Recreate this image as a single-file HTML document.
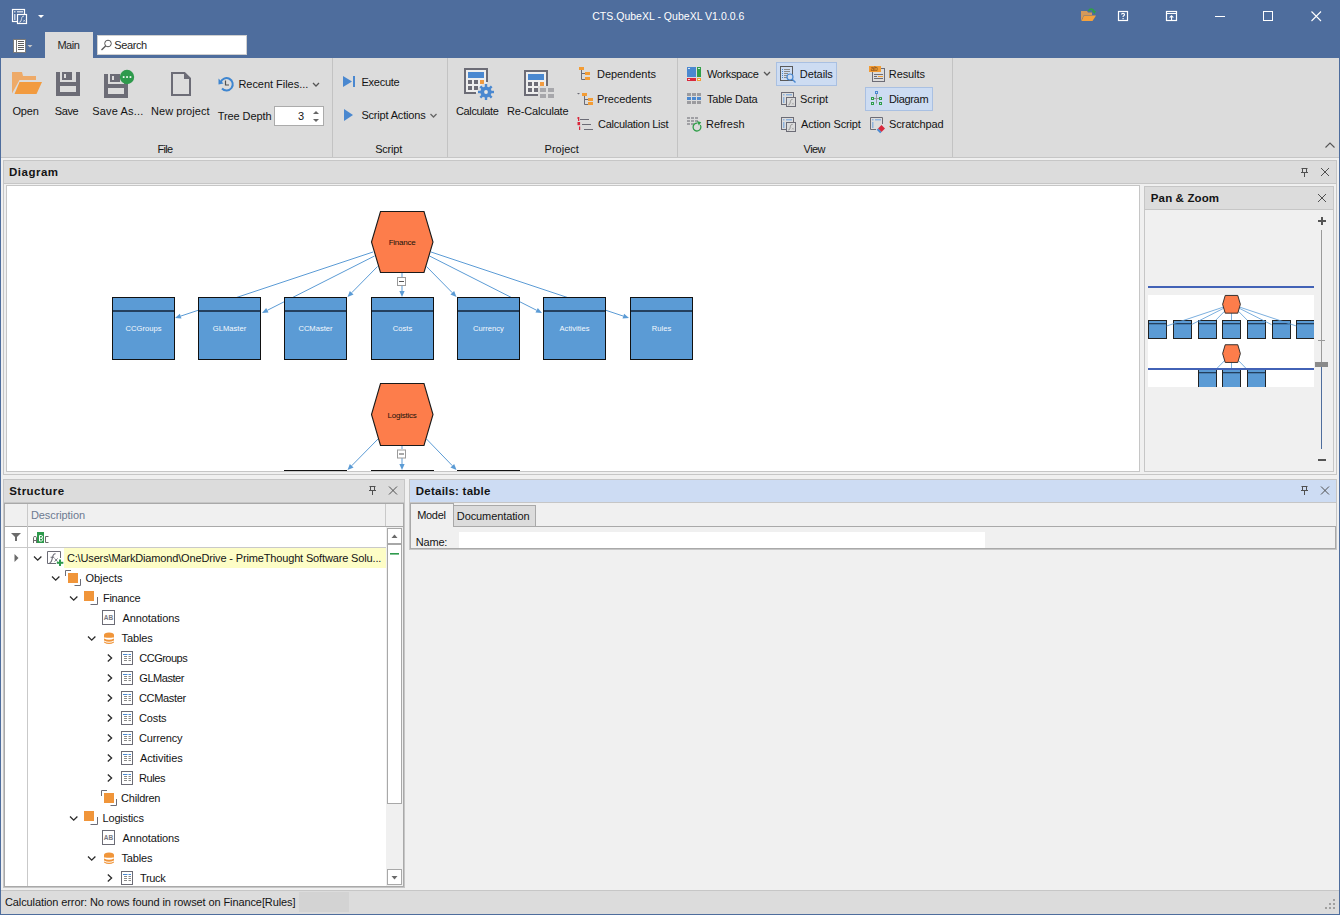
<!DOCTYPE html>
<html><head><meta charset="utf-8">
<style>
*{box-sizing:border-box;margin:0;padding:0}
html,body{width:1340px;height:915px;overflow:hidden}
body{position:relative;background:#f0f0f0;font-family:"Liberation Sans",sans-serif;font-size:11px;color:#1e1e1e}
.a{position:absolute}
.t{position:absolute;white-space:nowrap;line-height:1;font-size:11px;color:#141414}
svg{position:absolute;overflow:visible}
.b{font-weight:bold;font-size:11.5px}
</style></head><body>
<!-- window frame -->
<div class="a" style="left:0;top:0;width:1340px;height:58px;background:#4e6d9d"></div>
<div class="a" style="left:0;top:0;width:1px;height:915px;background:#4e6d9d"></div>
<div class="a" style="left:1339px;top:0;width:1px;height:915px;background:#4e6d9d"></div>
<div class="a" style="left:0;top:914px;width:1340px;height:1px;background:#4e6d9d"></div>

<!-- TITLE BAR -->
<svg style="left:0;top:0" width="60" height="58">
  <rect x="12.5" y="9.5" width="12" height="12" fill="none" stroke="#fff" stroke-width="1.2"/>
  <rect x="14" y="11" width="1.5" height="1.5" fill="#c9d3e3"/>
  <rect x="17" y="11" width="6" height="1.5" fill="#c9d3e3"/>
  <rect x="14" y="14" width="1.5" height="6" fill="#c9d3e3"/>
  <rect x="17.5" y="14.5" width="9" height="9" fill="#4e6d9d" stroke="#fff" stroke-width="1.2"/>
  <path d="M19.3 22.2 C21 22.4 21.2 20 21.6 18.5 C22 16.6 22.6 16 24 16.2" fill="none" stroke="#dfe5ef" stroke-width="1"/><path d="M23.3 19.8 L25.2 21.7 M25.2 19.8 L23.3 21.7" stroke="#dfe5ef" stroke-width="0.7"/>
  <path d="M38 15 L44 15 L41 18 Z" fill="#fff"/>
  <rect x="13.5" y="39.5" width="12" height="13" fill="#fff" stroke="#7a7a7a" stroke-width="1"/>
  <rect x="16" y="40" width="1" height="12" fill="#7a7a7a"/>
  <rect x="18" y="41" width="6" height="1" fill="#606060"/>
  <rect x="18" y="43" width="6" height="1" fill="#606060"/>
  <rect x="18" y="45" width="6" height="1" fill="#606060"/>
  <rect x="18" y="47" width="6" height="1" fill="#606060"/>
  <rect x="18" y="49" width="6" height="1" fill="#606060"/>
  <path d="M27.5 45 L32.5 45 L30 47.5 Z" fill="#c8c8c8"/>
</svg>
<div class="t" style="left:592.2px;top:11px;color:#fff;font-size:10.5px;letter-spacing:0.023px">CTS.QubeXL - QubeXL V1.0.0.6</div>
<svg style="left:1075px;top:0" width="265" height="32">
  <!-- open folder with green arrow -->
  <path d="M6 11 L12 11 L13 12.5 L17 12.5 L17 15 L9 15 L6 21 Z" fill="#d39a5a"/>
  <path d="M9 15.5 L21 15.5 L17.5 21 L6.5 21 Z" fill="#f4a23d"/>
  <path d="M13.5 11 C15 8.5 18 8.5 19 11.5" fill="none" stroke="#2f9e48" stroke-width="1.8"/>
  <path d="M17 11 L21 11 L19.5 14 Z" fill="#2f9e48"/>
  <!-- help -->
  <rect x="43.5" y="11.5" width="9" height="9" fill="none" stroke="#fff" stroke-width="1.2"/>
  <path d="M46.5 14.5 C46.5 13 49.5 13 49.5 14.5 C49.5 16 48 15.5 48 17" fill="none" stroke="#fff" stroke-width="1.1"/>
  <rect x="47.5" y="18" width="1.2" height="1.2" fill="#fff"/>
  <!-- third icon -->
  <rect x="91.5" y="11.5" width="10" height="9" fill="none" stroke="#fff" stroke-width="1.2"/>
  <rect x="92" y="13" width="9" height="1" fill="#fff"/>
  <path d="M94 17.5 L96.5 15 L99 17.5 Z" fill="#fff"/>
  <rect x="96" y="17" width="1.1" height="3.5" fill="#fff"/>
  <!-- min max close -->
  <rect x="140" y="16" width="10" height="1" fill="#fff"/>
  <rect x="188.5" y="11.5" width="9" height="9" fill="none" stroke="#fff" stroke-width="1"/>
  <path d="M236.5 11.5 L246 21 M246 11.5 L236.5 21" stroke="#fff" stroke-width="1.1"/>
</svg>

<!-- TAB ROW -->
<div class="a" style="left:45px;top:32px;width:48px;height:26px;background:#dcdcdc"></div>
<div class="t" style="left:57.4px;top:40px;color:#262626;letter-spacing:-0.467px">Main</div>
<div class="a" style="left:97px;top:35px;width:150px;height:20px;background:#fff;border:1px solid #d0d0d0"></div>
<svg style="left:100px;top:38px" width="14" height="14">
  <circle cx="8" cy="5.5" r="3.3" fill="none" stroke="#555" stroke-width="1"/>
  <path d="M5.6 8 L1.5 12" stroke="#555" stroke-width="1.3"/>
</svg>
<div class="t" style="left:114.2px;top:40px;color:#262626;letter-spacing:-0.36px">Search</div>

<!-- RIBBON -->
<div class="a" style="left:1px;top:58px;width:1338px;height:100px;background:#dcdcdc;border-bottom:1px solid #c6c6c6"></div>
<div class="a" style="left:332px;top:58px;width:1px;height:99px;background:#c3c3c3"></div>
<div class="a" style="left:447px;top:58px;width:1px;height:99px;background:#c3c3c3"></div>
<div class="a" style="left:677px;top:58px;width:1px;height:99px;background:#c3c3c3"></div>
<div class="a" style="left:952px;top:58px;width:1px;height:99px;background:#c3c3c3"></div>

<svg style="left:0;top:0" width="1340" height="160">
  <!-- Open -->
  <path d="M12 72 H22 L23 76 H36 V80 H19.5 L12 93.5 Z" fill="#eeaa68"/>
  <path d="M19.5 82 H42 L36.5 94 H14.5 Z" fill="#f29b3f"/>
  <!-- Save -->
  <g fill="#6c6c76">
    <rect x="56" y="72" width="4" height="24"/><rect x="76" y="72" width="4" height="24"/>
    <rect x="56" y="82" width="24" height="4"/><rect x="56" y="92" width="24" height="4"/>
    <rect x="62" y="72" width="10" height="8"/>
  </g>
  <rect x="64" y="74" width="2" height="4" fill="#dcdcdc"/>
  <!-- Save As -->
  <g fill="#6c6c76">
    <rect x="104" y="74" width="4" height="24"/><rect x="124" y="74" width="4" height="24"/>
    <rect x="104" y="84" width="24" height="4"/><rect x="104" y="94" width="24" height="4"/>
    <rect x="110" y="74" width="10" height="8"/>
  </g>
  <rect x="112" y="76" width="2" height="4" fill="#dcdcdc"/>
  <circle cx="127" cy="77" r="7.2" fill="#2e9a4c"/>
  <rect x="122.8" y="76.2" width="1.7" height="1.7" fill="#fff"/>
  <rect x="126.2" y="76.2" width="1.7" height="1.7" fill="#fff"/>
  <rect x="129.6" y="76.2" width="1.7" height="1.7" fill="#fff"/>
  <!-- New project -->
  <path d="M172 73 H184.5 L190 78.5 V95 H172 Z" fill="none" stroke="#6c6c76" stroke-width="2"/>
  <path d="M184 72 L191 79 H184 Z" fill="#6c6c76"/>
  <!-- Recent -->
  <path d="M220.6 82.5 A6.2 6.2 0 1 1 222 88.5" fill="none" stroke="#3f86d0" stroke-width="2"/>
  <path d="M218.5 78.5 L223.5 83.5 L218.5 84.5 Z" fill="#3f86d0"/>
  <path d="M225.5 80.5 V85 H229" fill="none" stroke="#505050" stroke-width="1.2"/>
  <path d="M313 83 L316 86 L319 83" fill="none" stroke="#555" stroke-width="1.3"/>
  <!-- spin -->
  <rect x="274.5" y="106.5" width="49" height="19" fill="#fff" stroke="#ababab"/>
  <path d="M313 114 L316 111 L319 114 Z" fill="#666"/>
  <path d="M313 119 L316 122 L319 119 Z" fill="#666"/>
  <!-- Execute -->
  <path d="M343 76 L352 81.5 L343 87 Z" fill="#4a88d0"/>
  <rect x="353" y="76" width="2" height="11" fill="#4a88d0"/>
  <path d="M344 109 L353 115 L344 121 Z" fill="#4a88d0"/>
  <path d="M430.5 114 L433.5 117 L436.5 114" fill="none" stroke="#666" stroke-width="1.3"/>
  <!-- Calculate -->
  <rect x="465" y="69" width="22" height="24" fill="#eeeeee"/>
  <path d="M476 93 H465 V69 H487 V82" fill="none" stroke="#6c6c76" stroke-width="2"/>
  <rect x="468" y="72" width="16" height="6" fill="#4a88d0"/>
  <g fill="#6c6c76"><rect x="468" y="80" width="4" height="4"/><rect x="474" y="80" width="4" height="4"/><rect x="468" y="86" width="4" height="4"/><rect x="474" y="86" width="4" height="4"/></g>
  <rect x="480" y="80" width="4" height="4" fill="#f29b3f"/>
  <circle cx="486" cy="92" r="8.5" fill="#dcdcdc"/>
  <g fill="#4a88d0">
    <circle cx="486" cy="92" r="5.6"/>
    <rect x="484.8" y="84" width="2.4" height="16"/>
    <rect x="478" y="90.8" width="16" height="2.4"/>
    <rect x="484.8" y="84" width="2.4" height="16" transform="rotate(45 486 92)"/>
    <rect x="478" y="90.8" width="16" height="2.4" transform="rotate(45 486 92)"/>
  </g>
  <circle cx="486" cy="92" r="1.9" fill="#e6e6e6"/>
  <!-- Re-Calculate -->
  <rect x="525" y="71" width="22" height="24" fill="#eeeeee"/>
  <path d="M538 95 H525 V71 H547 V86" fill="none" stroke="#6c6c76" stroke-width="2"/>
  <rect x="528" y="74" width="16" height="6" fill="#4a88d0"/>
  <g fill="#6c6c76"><rect x="528" y="82" width="4" height="4"/><rect x="534" y="82" width="4" height="4"/><rect x="528" y="88" width="4" height="4"/><rect x="534" y="88" width="4" height="4"/></g>
  <rect x="540" y="82" width="4" height="4" fill="#f29b3f"/>
  <rect x="538" y="86" width="18" height="13" fill="#dcdcdc"/>
  <g fill="#a7a7ab"><rect x="540" y="88" width="6" height="4"/><rect x="548" y="88" width="6" height="4"/><rect x="540" y="94" width="6" height="4"/><rect x="548" y="94" width="6" height="4"/></g>
  <!-- Dependents -->
  <rect x="579" y="67" width="5" height="3" fill="#f39c34"/>
  <path d="M581.5 70 V79.5 H585 M581.5 73.5 H585" fill="none" stroke="#6c6c76" stroke-width="1"/>
  <rect x="585" y="72" width="5" height="3" fill="#f39c34"/>
  <rect x="585" y="77" width="5" height="3" fill="#f39c34"/>
  <!-- Precedents -->
  <path d="M577 93 H580 L578.5 94.5 Z" fill="#6c6c76"/>
  <rect x="582" y="93" width="5" height="3" fill="#f39c34"/>
  <path d="M584.5 96 V104.5 H588 M584.5 99.5 H588" fill="none" stroke="#6c6c76" stroke-width="1"/>
  <rect x="588" y="98" width="5" height="3" fill="#f39c34"/>
  <rect x="588" y="102" width="5" height="3" fill="#f39c34"/>
  <!-- Calculation List -->
  <g fill="#d9283c">
    <rect x="578" y="117" width="1.3" height="4"/><rect x="577" y="117.5" width="1.2" height="1"/>
    <rect x="577.5" y="122" width="2.6" height="3.2"/>
    <rect x="579" y="126.5" width="1.2" height="3.5"/>
  </g>
  <g fill="#6c6c76"><rect x="580" y="119" width="9" height="1"/><rect x="582" y="124" width="9" height="1"/><rect x="584" y="129" width="9" height="1"/></g>
  <!-- Workspace -->
  <rect x="687" y="67" width="9" height="10" fill="#4a88d0"/>
  <rect x="697" y="67" width="4" height="10" fill="#2f9e48"/>
  <rect x="687" y="78" width="9" height="3" fill="#d9283c"/>
  <rect x="697" y="78" width="4" height="3" fill="#f39c34"/>
  <g fill="#fff" opacity="0.8"><rect x="688" y="68" width="2" height="1"/><rect x="698" y="68" width="2" height="1"/><rect x="688" y="79" width="2" height="1"/><rect x="698" y="79" width="2" height="1"/></g>
  <path d="M764 72 L767 75 L770 72" fill="none" stroke="#555" stroke-width="1.3"/>
  <!-- Table Data -->
  <g fill="#9b9b9f"><rect x="687" y="93" width="4" height="3"/><rect x="692" y="93" width="4" height="3"/><rect x="697" y="93" width="4" height="3"/><rect x="687" y="101" width="4" height="3"/><rect x="692" y="101" width="4" height="3"/><rect x="697" y="101" width="4" height="3"/></g>
  <g fill="#4a88d0"><rect x="687" y="97" width="4" height="3"/><rect x="692" y="97" width="4" height="3"/><rect x="697" y="97" width="4" height="3"/></g>
  <!-- Refresh -->
  <g fill="#a0a0a4"><rect x="687" y="117" width="3" height="2"/><rect x="691" y="117" width="3" height="2"/><rect x="695" y="117" width="3" height="2"/><rect x="687" y="120" width="3" height="2"/><rect x="691" y="120" width="3" height="2"/><rect x="695" y="120" width="3" height="2"/><rect x="687" y="123" width="3" height="2"/><rect x="691" y="123" width="3" height="2"/></g>
  <path d="M700.3 125 A3.9 3.9 0 1 1 697.5 123.2" fill="none" stroke="#2f9e48" stroke-width="1.3"/>
  <path d="M697 121 L701.2 122.2 L698.8 125.4 Z" fill="#2f9e48"/>
  <!-- Details button -->
  <rect x="776.5" y="62.5" width="60" height="23" fill="#cddcf2" stroke="#a9c0e2"/>
  <rect x="780.5" y="66.5" width="12" height="14" fill="none" stroke="#5a5a5a"/>
  <g fill="#4a88d0"><rect x="782" y="69" width="1" height="1"/><rect x="782" y="71" width="1" height="1"/><rect x="782" y="73" width="1" height="1"/><rect x="782" y="75" width="1" height="1"/><rect x="782" y="77" width="1" height="1"/></g>
  <g fill="#8a8a8a"><rect x="784" y="69" width="6" height="1"/><rect x="784" y="71" width="6" height="1"/><rect x="784" y="73" width="4" height="1"/><rect x="784" y="75" width="3" height="1"/><rect x="784" y="77" width="3" height="1"/></g>
  <circle cx="790" cy="77" r="3" fill="#cddcf2" stroke="#4a88d0" stroke-width="1.2"/>
  <path d="M792.2 79.2 L795.5 82.5" stroke="#4a88d0" stroke-width="1.4"/>
  <!-- Script icon -->
  <g id="scr">
  <rect x="781.5" y="92.5" width="12" height="12" fill="none" stroke="#6c6c76"/>
  <rect x="783" y="94" width="1.5" height="1.5" fill="#8fb3dd"/><rect x="786" y="94" width="6" height="1.5" fill="#8fb3dd"/>
  <rect x="783" y="97" width="1.5" height="6" fill="#8fb3dd"/>
  <rect x="786.5" y="97.5" width="9" height="9" fill="#dcdcdc" stroke="#6c6c76"/>
  <path d="M788.3 105 C789.8 105.2 790 103 790.4 101.5 C790.8 99.8 791.3 99.2 792.6 99.4" fill="none" stroke="#8a8a8a" stroke-width="0.9"/><path d="M792 102.8 L793.8 104.6 M793.8 102.8 L792 104.6" stroke="#9a9a9a" stroke-width="0.6"/>
  </g>
  <use href="#scr" x="0" y="25"/>
  <!-- Results -->
  <rect x="872.5" y="68.5" width="12" height="13" fill="none" stroke="#6c6c76"/>
  <rect x="869" y="66" width="12" height="6" fill="#f39c34"/>
  <text x="870.5" y="71.3" font-size="6.5" fill="#7a4a1a" font-family="Liberation Sans">ab</text>
  <rect x="874" y="74" width="9" height="1" fill="#6c6c76"/>
  <rect x="874" y="76" width="3" height="1" fill="#6c6c76"/><rect x="878" y="76" width="5" height="1" fill="#f39c34"/>
  <rect x="874" y="78" width="9" height="1" fill="#6c6c76"/>
  <!-- Diagram button -->
  <rect x="865.5" y="87.5" width="67" height="23" fill="#cddcf2" stroke="#a9c0e2"/>
  <rect x="875.5" y="91.5" width="2" height="2" fill="none" stroke="#4a88d0" stroke-width="1"/>
  <path d="M876.5 94 V103.5 M873.5 98.5 H880" stroke="#9a9aa0" stroke-width="1"/>
  <g fill="none" stroke="#2f9e48" stroke-width="1"><rect x="871.5" y="97.5" width="2" height="2"/><rect x="879.5" y="97.5" width="2" height="2"/><rect x="871.5" y="102.5" width="2" height="2"/><rect x="879.5" y="102.5" width="2" height="2"/></g>
  <!-- Scratchpad -->
  <path d="M882.5 124 V117.5 H870.5 V129.5 H876" fill="none" stroke="#6c6c76"/>
  <rect x="872" y="119" width="1.5" height="1.5" fill="#8fb3dd"/><rect x="875" y="119" width="6" height="1.5" fill="#8fb3dd"/>
  <rect x="872" y="122" width="1.5" height="6" fill="#8fb3dd"/>
  <path d="M881.5 125 L885 128.5 L881.5 132 L878 128.5 Z" fill="#d9283c"/>
  <path d="M878 128.5 L881.5 132 L880.2 133.3 L876.7 129.8 Z" fill="#4a88d0"/>
  <!-- collapse -->
  <path d="M1325.5 147.5 L1330 143 L1334.5 147.5" fill="none" stroke="#555" stroke-width="1.1"/>
</svg>
<div class="t" style="left:12.4px;top:106px;letter-spacing:-0.134px">Open</div>
<div class="t" style="left:54.8px;top:106px;letter-spacing:-0.4px">Save</div>
<div class="t" style="left:92.2px;top:106px;letter-spacing:0.177px">Save As...</div>
<div class="t" style="left:151.0px;top:106px;letter-spacing:0.04px">New project</div>
<div class="t" style="left:238.4px;top:79px;letter-spacing:-0.029px">Recent Files...</div>
<div class="t" style="left:217.8px;top:111px;letter-spacing:-0.088px">Tree Depth</div>
<div class="t" style="left:298px;top:111px;">3</div>
<div class="t" style="left:157.6px;top:144px;letter-spacing:-0.734px">File</div>
<div class="t" style="left:361.4px;top:77px;letter-spacing:-0.233px">Execute</div>
<div class="t" style="left:361.4px;top:110px;letter-spacing:-0.184px">Script Actions</div>
<div class="t" style="left:375.2px;top:144px;letter-spacing:-0.2px">Script</div>
<div class="t" style="left:456.0px;top:106px;letter-spacing:-0.375px">Calculate</div>
<div class="t" style="left:507.0px;top:106px;letter-spacing:-0.182px">Re-Calculate</div>
<div class="t" style="left:597.0px;top:69px;letter-spacing:-0.046px">Dependents</div>
<div class="t" style="left:597.0px;top:94px;letter-spacing:-0.112px">Precedents</div>
<div class="t" style="left:598.0px;top:119px;letter-spacing:-0.267px">Calculation List</div>
<div class="t" style="left:544.6px;top:144px;letter-spacing:0.0px">Project</div>
<div class="t" style="left:707.0px;top:69px;letter-spacing:-0.375px">Workspace</div>
<div class="t" style="left:707.0px;top:94px;letter-spacing:-0.222px">Table Data</div>
<div class="t" style="left:706.0px;top:119px;letter-spacing:0.0px">Refresh</div>
<div class="t" style="left:799.8px;top:69px;letter-spacing:-0.1px">Details</div>
<div class="t" style="left:800.0px;top:94px;letter-spacing:0.0px">Script</div>
<div class="t" style="left:801.0px;top:119px;letter-spacing:-0.167px">Action Script</div>
<div class="t" style="left:888.8px;top:69px;letter-spacing:-0.1px">Results</div>
<div class="t" style="left:889.0px;top:94px;letter-spacing:-0.333px">Diagram</div>
<div class="t" style="left:889.0px;top:119px;letter-spacing:-0.111px">Scratchpad</div>
<div class="t" style="left:803.6px;top:144px;letter-spacing:-0.6px">View</div>


<!-- DIAGRAM PANEL -->
<div class="a" style="left:3px;top:160px;width:1334px;height:315px;border:1px solid #c6c6c6;background:#f0f0f0"></div>
<div class="a" style="left:4px;top:161px;width:1332px;height:23px;background:#dcdcdc;border-bottom:1px solid #c6c6c6"></div>
<div class="t b" style="left:9.0px;top:167px;letter-spacing:0.5px">Diagram</div>
<div class="a" style="left:6px;top:185px;width:1134px;height:287px;background:#fff;border:1px solid #c6c6c6"></div>

<svg style="left:0;top:0" width="1340" height="480">
<defs><clipPath id="cv"><rect x="7" y="186" width="1132" height="285"/></clipPath></defs>
<g clip-path="url(#cv)">
<line x1="373" y1="252" x2="180.69" y2="316.10" stroke="#5b9bd5" stroke-width="1"/><path d="M175 318 L179.87 313.64 L181.51 318.57 Z" fill="#5b9bd5"/>
<line x1="374.5" y1="256" x2="267.35" y2="310.29" stroke="#5b9bd5" stroke-width="1"/><path d="M262 313 L266.18 307.97 L268.53 312.61 Z" fill="#5b9bd5"/>
<line x1="377.5" y1="266.5" x2="351.71" y2="292.72" stroke="#5b9bd5" stroke-width="1"/><path d="M347.5 297 L349.85 290.90 L353.56 294.55 Z" fill="#5b9bd5"/>
<line x1="402" y1="273" x2="402" y2="277" stroke="#5b9bd5"/>
<line x1="402" y1="286" x2="402.00" y2="291.00" stroke="#5b9bd5" stroke-width="1"/><path d="M402 297 L399.40 291.00 L404.60 291.00 Z" fill="#5b9bd5"/>
<line x1="426.5" y1="266.5" x2="452.29" y2="292.72" stroke="#5b9bd5" stroke-width="1"/><path d="M456.5 297 L450.44 294.55 L454.15 290.90 Z" fill="#5b9bd5"/>
<line x1="429.5" y1="256" x2="536.65" y2="310.29" stroke="#5b9bd5" stroke-width="1"/><path d="M542 313 L535.47 312.61 L537.82 307.97 Z" fill="#5b9bd5"/>
<line x1="431" y1="252" x2="623.31" y2="316.10" stroke="#5b9bd5" stroke-width="1"/><path d="M629 318 L622.49 318.57 L624.13 313.64 Z" fill="#5b9bd5"/>
<rect x="112.5" y="297.5" width="62" height="62" fill="#5b9bd5" stroke="#111" stroke-width="1"/><rect x="113" y="310" width="61" height="2" fill="#24405e"/><text x="143.5" y="331" text-anchor="middle" font-family="Liberation Sans" font-size="7.6" fill="#f4f8fc">CCGroups</text>
<rect x="198.5" y="297.5" width="62" height="62" fill="#5b9bd5" stroke="#111" stroke-width="1"/><rect x="199" y="310" width="61" height="2" fill="#24405e"/><text x="229.5" y="331" text-anchor="middle" font-family="Liberation Sans" font-size="7.6" fill="#f4f8fc">GLMaster</text>
<rect x="284.5" y="297.5" width="62" height="62" fill="#5b9bd5" stroke="#111" stroke-width="1"/><rect x="285" y="310" width="61" height="2" fill="#24405e"/><text x="315.5" y="331" text-anchor="middle" font-family="Liberation Sans" font-size="7.6" fill="#f4f8fc">CCMaster</text>
<rect x="371.5" y="297.5" width="62" height="62" fill="#5b9bd5" stroke="#111" stroke-width="1"/><rect x="372" y="310" width="61" height="2" fill="#24405e"/><text x="402.5" y="331" text-anchor="middle" font-family="Liberation Sans" font-size="7.6" fill="#f4f8fc">Costs</text>
<rect x="457.5" y="297.5" width="62" height="62" fill="#5b9bd5" stroke="#111" stroke-width="1"/><rect x="458" y="310" width="61" height="2" fill="#24405e"/><text x="488.5" y="331" text-anchor="middle" font-family="Liberation Sans" font-size="7.6" fill="#f4f8fc">Currency</text>
<rect x="543.5" y="297.5" width="62" height="62" fill="#5b9bd5" stroke="#111" stroke-width="1"/><rect x="544" y="310" width="61" height="2" fill="#24405e"/><text x="574.5" y="331" text-anchor="middle" font-family="Liberation Sans" font-size="7.6" fill="#f4f8fc">Activities</text>
<rect x="630.5" y="297.5" width="62" height="62" fill="#5b9bd5" stroke="#111" stroke-width="1"/><rect x="631" y="310" width="61" height="2" fill="#24405e"/><text x="661.5" y="331" text-anchor="middle" font-family="Liberation Sans" font-size="7.6" fill="#f4f8fc">Rules</text>
<polygon points="380.5,211.5 424,211.5 433,242 424,272.5 380.5,272.5 371.5,242" fill="#fd7d4b" stroke="#1a1a1a" stroke-width="1.1"/><text x="402" y="245" text-anchor="middle" font-family="Liberation Sans" font-size="8" letter-spacing="-0.25" fill="#20120a">Finance</text>
<rect x="397.5" y="277.5" width="8" height="8" fill="#fff" stroke="#9a9a9a"/><rect x="399" y="281" width="5" height="1" fill="#555"/>
<line x1="378" y1="439" x2="351.71" y2="465.72" stroke="#5b9bd5" stroke-width="1"/><path d="M347.5 470 L349.85 463.90 L353.56 467.55 Z" fill="#5b9bd5"/>
<line x1="402" y1="445" x2="402" y2="449" stroke="#5b9bd5"/>
<line x1="402" y1="458" x2="402.00" y2="464.00" stroke="#5b9bd5" stroke-width="1"/><path d="M402 470 L399.40 464.00 L404.60 464.00 Z" fill="#5b9bd5"/>
<line x1="426.5" y1="439" x2="452.33" y2="465.69" stroke="#5b9bd5" stroke-width="1"/><path d="M456.5 470 L450.46 467.50 L454.20 463.88 Z" fill="#5b9bd5"/>
<rect x="284.5" y="470.5" width="62" height="62" fill="#5b9bd5" stroke="#111" stroke-width="1"/><rect x="285" y="483" width="61" height="2" fill="#24405e"/>
<rect x="371.5" y="470.5" width="62" height="62" fill="#5b9bd5" stroke="#111" stroke-width="1"/><rect x="372" y="483" width="61" height="2" fill="#24405e"/>
<rect x="457.5" y="470.5" width="62" height="62" fill="#5b9bd5" stroke="#111" stroke-width="1"/><rect x="458" y="483" width="61" height="2" fill="#24405e"/>
<polygon points="380.5,383.5 424,383.5 433,414.5 424,445.5 380.5,445.5 371.5,414.5" fill="#fd7d4b" stroke="#1a1a1a" stroke-width="1.1"/><text x="402" y="417.5" text-anchor="middle" font-family="Liberation Sans" font-size="8" letter-spacing="-0.25" fill="#20120a">Logistics</text>
<rect x="397.5" y="450.0" width="8" height="8" fill="#fff" stroke="#9a9a9a"/><rect x="399" y="453.5" width="5" height="1" fill="#555"/>
</g>
</svg>

<!-- PAN ZOOM -->
<div class="a" style="left:1144px;top:186px;width:190px;height:286px;border:1px solid #c6c6c6;background:#f0f0f0"></div>
<div class="a" style="left:1145px;top:187px;width:188px;height:23px;background:#dcdcdc;border-bottom:1px solid #c6c6c6"></div>
<div class="t b" style="left:1150.8px;top:193px;letter-spacing:0.133px">Pan &amp; Zoom</div>

<svg style="left:0;top:0" width="1340" height="480">
<defs><clipPath id="mm"><rect x="1148" y="280" width="166" height="107"/></clipPath></defs>
<rect x="1148" y="295" width="166" height="92" fill="#fff"/>
<g clip-path="url(#mm)">
<rect x="1148.5" y="320.5" width="18" height="18" fill="#5b9bd5" stroke="#222" stroke-width="1"/><rect x="1149" y="323" width="17" height="1.3" fill="#24405e"/>
<rect x="1173.5" y="320.5" width="18" height="18" fill="#5b9bd5" stroke="#222" stroke-width="1"/><rect x="1174" y="323" width="17" height="1.3" fill="#24405e"/>
<rect x="1198.5" y="320.5" width="18" height="18" fill="#5b9bd5" stroke="#222" stroke-width="1"/><rect x="1199" y="323" width="17" height="1.3" fill="#24405e"/>
<rect x="1222.5" y="320.5" width="18" height="18" fill="#5b9bd5" stroke="#222" stroke-width="1"/><rect x="1223" y="323" width="17" height="1.3" fill="#24405e"/>
<rect x="1247.5" y="320.5" width="18" height="18" fill="#5b9bd5" stroke="#222" stroke-width="1"/><rect x="1248" y="323" width="17" height="1.3" fill="#24405e"/>
<rect x="1272.5" y="320.5" width="18" height="18" fill="#5b9bd5" stroke="#222" stroke-width="1"/><rect x="1273" y="323" width="17" height="1.3" fill="#24405e"/>
<rect x="1296.5" y="320.5" width="18" height="18" fill="#5b9bd5" stroke="#222" stroke-width="1"/><rect x="1297" y="323" width="17" height="1.3" fill="#24405e"/>
<rect x="1198.5" y="369.5" width="18" height="18" fill="#5b9bd5" stroke="#222" stroke-width="1"/><rect x="1199" y="372" width="17" height="1.3" fill="#24405e"/>
<rect x="1222.5" y="369.5" width="18" height="18" fill="#5b9bd5" stroke="#222" stroke-width="1"/><rect x="1223" y="372" width="17" height="1.3" fill="#24405e"/>
<rect x="1247.5" y="369.5" width="18" height="18" fill="#5b9bd5" stroke="#222" stroke-width="1"/><rect x="1248" y="372" width="17" height="1.3" fill="#24405e"/>
<line x1="1223.21" y1="307.16" x2="1166.65" y2="326.01" stroke="#5b9bd5" stroke-width="0.8"/>
<line x1="1223.64" y1="308.30" x2="1191.50" y2="324.58" stroke="#5b9bd5" stroke-width="0.8"/>
<line x1="1224.50" y1="311.30" x2="1215.93" y2="320.01" stroke="#5b9bd5" stroke-width="0.8"/>
<line x1="1231.50" y1="313.16" x2="1231.50" y2="320.01" stroke="#5b9bd5" stroke-width="0.8"/>
<line x1="1238.50" y1="311.30" x2="1247.07" y2="320.01" stroke="#5b9bd5" stroke-width="0.8"/>
<line x1="1239.36" y1="308.30" x2="1271.50" y2="324.58" stroke="#5b9bd5" stroke-width="0.8"/>
<line x1="1239.79" y1="307.16" x2="1296.35" y2="326.01" stroke="#5b9bd5" stroke-width="0.8"/>
<line x1="1224.64" y1="360.58" x2="1215.93" y2="369.44" stroke="#5b9bd5" stroke-width="0.8"/>
<line x1="1231.50" y1="362.30" x2="1231.50" y2="369.44" stroke="#5b9bd5" stroke-width="0.8"/>
<line x1="1238.50" y1="360.58" x2="1247.07" y2="369.44" stroke="#5b9bd5" stroke-width="0.8"/>
<polygon points="1225.21,295.44 1237.79,295.44 1240.36,304.30 1237.79,313.16 1225.21,313.16 1222.64,304.30" fill="#fd7d4b" stroke="#222" stroke-width="0.9"/>
<polygon points="1225.21,344.73 1237.79,344.73 1240.36,353.58 1237.79,362.44 1225.21,362.44 1222.64,353.58" fill="#fd7d4b" stroke="#222" stroke-width="0.9"/>
</g>
<rect x="1148" y="1314" width="0" height="0"/>
<rect x="1148" y="286" width="166" height="2" fill="#4262b6"/>
<rect x="1148" y="368" width="166" height="2" fill="#4262b6"/>
</svg>

<!-- STRUCTURE PANEL -->
<div class="a" style="left:3px;top:479px;width:402px;height:409px;border:1px solid #c6c6c6;background:#f0f0f0"></div>
<div class="a" style="left:4px;top:480px;width:400px;height:23px;background:#dcdcdc;border-bottom:1px solid #c6c6c6"></div>
<div class="t b" style="left:9.2px;top:486px;letter-spacing:0.475px">Structure</div>

<div class="a" style="left:4px;top:503px;width:400px;height:384px;background:#fff;border:1px solid #a9a9a9"></div>
<div class="a" style="left:5px;top:504px;width:398px;height:22px;background:#f0f0f0"></div>
<div class="a" style="left:5px;top:526px;width:398px;height:1px;background:#a9a9a9"></div>
<div class="a" style="left:5px;top:547px;width:381px;height:1px;background:#c9c9c9"></div>
<div class="a" style="left:27px;top:504px;width:1px;height:382px;background:#c9c9c9"></div>
<div class="a" style="left:385px;top:504px;width:1px;height:22px;background:#c9c9c9"></div>
<div class="t" style="left:31.0px;top:510px;color:#6d7a90;letter-spacing:-0.1px">Description</div>
<div class="a" style="left:64px;top:548px;width:322px;height:20px;background:#fdfdc6"></div>
<svg style="left:0;top:0" width="1340" height="915">
<defs><clipPath id="tree"><rect x="5" y="548" width="380" height="338"/></clipPath></defs>
<path d="M11 533 H21 L17 537 V541 H15 V537 Z" fill="#6c6c6c"/>
<path d="M33.5 543 V537.5 Q33.5 536.5 35 536.5 Q36.5 536.5 36.5 537.5 V543 M33.5 540.5 H36.5" fill="none" stroke="#6a6a6a" stroke-width="1"/>
<rect x="37" y="532" width="7" height="11" fill="#2e9a4c"/>
<path d="M39.5 541 V535.5 H41.5 Q42.5 535.5 42.5 537 Q42.5 538.2 41 538.2 H39.5 M41 538.2 Q42.5 538.2 42.5 539.6 Q42.5 541 41.5 541 H39.5" fill="none" stroke="#fff" stroke-width="1"/>
<path d="M48.5 536.5 H45.5 V542.5 H48.5" fill="none" stroke="#6a6a6a" stroke-width="1"/>
<path d="M14.5 554 L18.5 558 L14.5 562 Z" fill="#6a6a6a"/>
<g clip-path="url(#tree)">
<path d="M34 556.5 L37.7 560.2 L41.4 556.5" fill="none" stroke="#2a2a2a" stroke-width="1.3"/>
<path d="M60.5 558 V551.5 H47.5 V563.5 H56" fill="none" stroke="#6c6c76" stroke-width="1"/>
<path d="M49.6 562.6 C51.3 562.8 51.8 561 52.3 558.2 C52.8 555.2 53.4 553.6 55.6 553.8 M50.6 557.3 H54.2" fill="none" stroke="#6c6c76" stroke-width="1.1"/>
<path d="M54.6 558.4 L57.6 561.6 M57.6 558.4 L54.6 561.6" fill="none" stroke="#6c6c76" stroke-width="0.9"/>
<rect x="59" y="559.5" width="2" height="6.5" fill="#2e9a4c"/><rect x="56.8" y="561.8" width="6.5" height="2" fill="#2e9a4c"/>
<path d="M52 576.5 L55.7 580.2 L59.4 576.5" fill="none" stroke="#2a2a2a" stroke-width="1.3"/>
<path d="M65.5 576 V570.5 H71" fill="none" stroke="#6c6c76" stroke-width="1"/>
<rect x="68" y="573" width="10" height="10" fill="#f0953a"/>
<path d="M74.5 585.5 H80.5 V579" fill="none" stroke="#6c6c76" stroke-width="1"/>
<path d="M70 596.5 L73.7 600.2 L77.4 596.5" fill="none" stroke="#2a2a2a" stroke-width="1.3"/>
<rect x="84" y="591" width="10" height="10" fill="#f0953a"/>
<path d="M90.5 604.5 H97.5 V597" fill="none" stroke="#6c6c76" stroke-width="1"/>
<rect x="102.5" y="610.5" width="12" height="14" fill="#fff" stroke="#6c6c76" stroke-width="1"/>
<text x="108.5" y="620" text-anchor="middle" font-family="Liberation Sans" font-weight="bold" font-size="6.5" fill="#77777f">AB</text>
<path d="M88 636.5 L91.7 640.2 L95.4 636.5" fill="none" stroke="#2a2a2a" stroke-width="1.3"/>
<ellipse cx="109" cy="635" rx="5" ry="2.6" fill="#f0953a"/>
<rect x="104" y="635" width="10" height="2.5" fill="#f0953a"/>
<path d="M104 638.5 Q109 641.2 114 638.5 V640.5 Q109 643.2 104 640.5 Z" fill="#f0953a"/>
<path d="M104 641.5 Q109 644.2 114 641.5 V642.5 Q109 645.6 104 642.5 Z" fill="#f0953a"/>
<path d="M107.8 654.5 L111.6 658 L107.8 661.5" fill="none" stroke="#2a2a2a" stroke-width="1.3"/>
<rect x="121.5" y="651.5" width="11" height="13" fill="#fff" stroke="#6c6c76" stroke-width="1"/>
<rect x="123" y="654" width="4.5" height="1" fill="#4a88d0"/><rect x="128.5" y="654" width="2.5" height="1" fill="#4a88d0"/>
<rect x="124" y="656" width="3" height="1" fill="#8a8a8a"/><rect x="128.5" y="656" width="2.5" height="1" fill="#8a8a8a"/>
<rect x="124" y="658" width="3" height="1" fill="#8a8a8a"/><rect x="128.5" y="658" width="2.5" height="1" fill="#8a8a8a"/>
<rect x="124" y="660" width="3" height="1" fill="#8a8a8a"/><rect x="128.5" y="660" width="2.5" height="1" fill="#8a8a8a"/>
<path d="M107.8 674.5 L111.6 678 L107.8 681.5" fill="none" stroke="#2a2a2a" stroke-width="1.3"/>
<rect x="121.5" y="671.5" width="11" height="13" fill="#fff" stroke="#6c6c76" stroke-width="1"/>
<rect x="123" y="674" width="4.5" height="1" fill="#4a88d0"/><rect x="128.5" y="674" width="2.5" height="1" fill="#4a88d0"/>
<rect x="124" y="676" width="3" height="1" fill="#8a8a8a"/><rect x="128.5" y="676" width="2.5" height="1" fill="#8a8a8a"/>
<rect x="124" y="678" width="3" height="1" fill="#8a8a8a"/><rect x="128.5" y="678" width="2.5" height="1" fill="#8a8a8a"/>
<rect x="124" y="680" width="3" height="1" fill="#8a8a8a"/><rect x="128.5" y="680" width="2.5" height="1" fill="#8a8a8a"/>
<path d="M107.8 694.5 L111.6 698 L107.8 701.5" fill="none" stroke="#2a2a2a" stroke-width="1.3"/>
<rect x="121.5" y="691.5" width="11" height="13" fill="#fff" stroke="#6c6c76" stroke-width="1"/>
<rect x="123" y="694" width="4.5" height="1" fill="#4a88d0"/><rect x="128.5" y="694" width="2.5" height="1" fill="#4a88d0"/>
<rect x="124" y="696" width="3" height="1" fill="#8a8a8a"/><rect x="128.5" y="696" width="2.5" height="1" fill="#8a8a8a"/>
<rect x="124" y="698" width="3" height="1" fill="#8a8a8a"/><rect x="128.5" y="698" width="2.5" height="1" fill="#8a8a8a"/>
<rect x="124" y="700" width="3" height="1" fill="#8a8a8a"/><rect x="128.5" y="700" width="2.5" height="1" fill="#8a8a8a"/>
<path d="M107.8 714.5 L111.6 718 L107.8 721.5" fill="none" stroke="#2a2a2a" stroke-width="1.3"/>
<rect x="121.5" y="711.5" width="11" height="13" fill="#fff" stroke="#6c6c76" stroke-width="1"/>
<rect x="123" y="714" width="4.5" height="1" fill="#4a88d0"/><rect x="128.5" y="714" width="2.5" height="1" fill="#4a88d0"/>
<rect x="124" y="716" width="3" height="1" fill="#8a8a8a"/><rect x="128.5" y="716" width="2.5" height="1" fill="#8a8a8a"/>
<rect x="124" y="718" width="3" height="1" fill="#8a8a8a"/><rect x="128.5" y="718" width="2.5" height="1" fill="#8a8a8a"/>
<rect x="124" y="720" width="3" height="1" fill="#8a8a8a"/><rect x="128.5" y="720" width="2.5" height="1" fill="#8a8a8a"/>
<path d="M107.8 734.5 L111.6 738 L107.8 741.5" fill="none" stroke="#2a2a2a" stroke-width="1.3"/>
<rect x="121.5" y="731.5" width="11" height="13" fill="#fff" stroke="#6c6c76" stroke-width="1"/>
<rect x="123" y="734" width="4.5" height="1" fill="#4a88d0"/><rect x="128.5" y="734" width="2.5" height="1" fill="#4a88d0"/>
<rect x="124" y="736" width="3" height="1" fill="#8a8a8a"/><rect x="128.5" y="736" width="2.5" height="1" fill="#8a8a8a"/>
<rect x="124" y="738" width="3" height="1" fill="#8a8a8a"/><rect x="128.5" y="738" width="2.5" height="1" fill="#8a8a8a"/>
<rect x="124" y="740" width="3" height="1" fill="#8a8a8a"/><rect x="128.5" y="740" width="2.5" height="1" fill="#8a8a8a"/>
<path d="M107.8 754.5 L111.6 758 L107.8 761.5" fill="none" stroke="#2a2a2a" stroke-width="1.3"/>
<rect x="121.5" y="751.5" width="11" height="13" fill="#fff" stroke="#6c6c76" stroke-width="1"/>
<rect x="123" y="754" width="4.5" height="1" fill="#4a88d0"/><rect x="128.5" y="754" width="2.5" height="1" fill="#4a88d0"/>
<rect x="124" y="756" width="3" height="1" fill="#8a8a8a"/><rect x="128.5" y="756" width="2.5" height="1" fill="#8a8a8a"/>
<rect x="124" y="758" width="3" height="1" fill="#8a8a8a"/><rect x="128.5" y="758" width="2.5" height="1" fill="#8a8a8a"/>
<rect x="124" y="760" width="3" height="1" fill="#8a8a8a"/><rect x="128.5" y="760" width="2.5" height="1" fill="#8a8a8a"/>
<path d="M107.8 774.5 L111.6 778 L107.8 781.5" fill="none" stroke="#2a2a2a" stroke-width="1.3"/>
<rect x="121.5" y="771.5" width="11" height="13" fill="#fff" stroke="#6c6c76" stroke-width="1"/>
<rect x="123" y="774" width="4.5" height="1" fill="#4a88d0"/><rect x="128.5" y="774" width="2.5" height="1" fill="#4a88d0"/>
<rect x="124" y="776" width="3" height="1" fill="#8a8a8a"/><rect x="128.5" y="776" width="2.5" height="1" fill="#8a8a8a"/>
<rect x="124" y="778" width="3" height="1" fill="#8a8a8a"/><rect x="128.5" y="778" width="2.5" height="1" fill="#8a8a8a"/>
<rect x="124" y="780" width="3" height="1" fill="#8a8a8a"/><rect x="128.5" y="780" width="2.5" height="1" fill="#8a8a8a"/>
<path d="M101.5 796 V790.5 H107" fill="none" stroke="#6c6c76" stroke-width="1"/>
<rect x="104" y="793" width="10" height="10" fill="#f0953a"/>
<path d="M110.5 805.5 H116.5 V799" fill="none" stroke="#6c6c76" stroke-width="1"/>
<path d="M70 816.5 L73.7 820.2 L77.4 816.5" fill="none" stroke="#2a2a2a" stroke-width="1.3"/>
<rect x="84" y="811" width="10" height="10" fill="#f0953a"/>
<path d="M90.5 824.5 H97.5 V817" fill="none" stroke="#6c6c76" stroke-width="1"/>
<rect x="102.5" y="830.5" width="12" height="14" fill="#fff" stroke="#6c6c76" stroke-width="1"/>
<text x="108.5" y="840" text-anchor="middle" font-family="Liberation Sans" font-weight="bold" font-size="6.5" fill="#77777f">AB</text>
<path d="M88 856.5 L91.7 860.2 L95.4 856.5" fill="none" stroke="#2a2a2a" stroke-width="1.3"/>
<ellipse cx="109" cy="855" rx="5" ry="2.6" fill="#f0953a"/>
<rect x="104" y="855" width="10" height="2.5" fill="#f0953a"/>
<path d="M104 858.5 Q109 861.2 114 858.5 V860.5 Q109 863.2 104 860.5 Z" fill="#f0953a"/>
<path d="M104 861.5 Q109 864.2 114 861.5 V862.5 Q109 865.6 104 862.5 Z" fill="#f0953a"/>
<path d="M107.8 874.5 L111.6 878 L107.8 881.5" fill="none" stroke="#2a2a2a" stroke-width="1.3"/>
<rect x="121.5" y="871.5" width="11" height="13" fill="#fff" stroke="#6c6c76" stroke-width="1"/>
<rect x="123" y="874" width="4.5" height="1" fill="#4a88d0"/><rect x="128.5" y="874" width="2.5" height="1" fill="#4a88d0"/>
<rect x="124" y="876" width="3" height="1" fill="#8a8a8a"/><rect x="128.5" y="876" width="2.5" height="1" fill="#8a8a8a"/>
<rect x="124" y="878" width="3" height="1" fill="#8a8a8a"/><rect x="128.5" y="878" width="2.5" height="1" fill="#8a8a8a"/>
<rect x="124" y="880" width="3" height="1" fill="#8a8a8a"/><rect x="128.5" y="880" width="2.5" height="1" fill="#8a8a8a"/>
</g>
<rect x="386" y="527" width="17" height="359" fill="#f0f0f0"/>
<rect x="387.5" y="528.5" width="14" height="15" fill="#fff" stroke="#a8a8a8"/>
<path d="M391.5 538 L394.5 534.5 L397.5 538 Z" fill="#6a6a6a"/>
<rect x="387.5" y="544.5" width="14" height="259" fill="#fff" stroke="#a8a8a8"/>
<rect x="390" y="553" width="9" height="1.6" fill="#2e9a4c"/>
<rect x="387.5" y="869.5" width="14" height="15" fill="#fff" stroke="#a8a8a8"/>
<path d="M391.5 876 L394.5 879.5 L397.5 876 Z" fill="#6a6a6a"/>
</svg>
<div class="t" style="left:66.9px;top:553px;letter-spacing:-0.149px">C:\Users\MarkDiamond\OneDrive - PrimeThought Software Solu...</div>
<div class="t" style="left:85.5px;top:573px;letter-spacing:-0.033px">Objects</div>
<div class="t" style="left:102.9px;top:593px;letter-spacing:-0.233px">Finance</div>
<div class="t" style="left:122.5px;top:613px;letter-spacing:-0.08px">Annotations</div>
<div class="t" style="left:121.5px;top:633px;letter-spacing:-0.12px">Tables</div>
<div class="t" style="left:139.3px;top:653px;letter-spacing:-0.514px">CCGroups</div>
<div class="t" style="left:139.3px;top:673px;letter-spacing:-0.457px">GLMaster</div>
<div class="t" style="left:138.9px;top:693px;letter-spacing:-0.314px">CCMaster</div>
<div class="t" style="left:138.9px;top:713px;letter-spacing:-0.1px">Costs</div>
<div class="t" style="left:138.9px;top:733px;letter-spacing:-0.143px">Currency</div>
<div class="t" style="left:139.9px;top:753px;letter-spacing:-0.066px">Activities</div>
<div class="t" style="left:138.9px;top:773px;letter-spacing:-0.4px">Rules</div>
<div class="t" style="left:121.1px;top:793px;letter-spacing:-0.229px">Children</div>
<div class="t" style="left:102.5px;top:813px;letter-spacing:-0.173px">Logistics</div>
<div class="t" style="left:122.5px;top:833px;letter-spacing:-0.1px">Annotations</div>
<div class="t" style="left:121.5px;top:853px;letter-spacing:-0.16px">Tables</div>
<div class="t" style="left:139.9px;top:873px;letter-spacing:-0.3px">Truck</div>

<!-- DETAILS PANEL -->
<div class="a" style="left:409px;top:479px;width:928px;height:71px;border:1px solid #c6c6c6;background:#f0f0f0"></div>
<div class="a" style="left:410px;top:480px;width:926px;height:23px;background:#cddcf3;border-bottom:1px solid #c6c6c6"></div>
<div class="t b" style="left:415.8px;top:486px;letter-spacing:0.23px">Details: table</div>

<!-- tabs -->
<div class="a" style="left:410px;top:526px;width:926px;height:23px;border:1px solid #a9a9a9;border-top:1px solid #a9a9a9;background:#f0f0f0"></div>
<div class="a" style="left:453px;top:505px;width:83px;height:22px;background:#dcdcdc;border:1px solid #a9a9a9"></div>
<div class="a" style="left:410px;top:503px;width:44px;height:24px;background:#f0f0f0;border:1px solid #a9a9a9;border-bottom:none;border-right:1px solid #a9a9a9"></div>
<div class="a" style="left:411px;top:526px;width:42px;height:1px;background:#f0f0f0"></div>
<div class="t" style="left:417.2px;top:510px;letter-spacing:-0.3px">Model</div>
<div class="t" style="left:456.8px;top:511px;letter-spacing:-0.1px">Documentation</div>
<div class="a" style="left:459px;top:532px;width:526px;height:16px;background:#fff"></div>
<div class="a" style="left:411px;top:548px;width:924px;height:1px;background:#a9a9a9"></div>
<div class="a" style="left:411px;top:530px;width:47px;height:18px;overflow:hidden"><div class="t" style="left:4.8px;top:7px;letter-spacing:-0.2px">Name:</div></div>
<!-- header icons -->
<svg style="left:0;top:0" width="1340" height="915">
  <defs>
    <g id="pin"><path d="M-3 0.5 H3 M-2 0.5 V4 M2 0.5 V4 M-3.5 4.5 H3.5 M0 4.5 V9" fill="none" stroke="#505050" stroke-width="1"/></g>
    <g id="xx"><path d="M-4 -4 L4 4 M4 -4 L-4 4" fill="none" stroke="#505050" stroke-width="1"/></g>
  </defs>
  <use href="#pin" x="1304.5" y="168"/>
  <use href="#xx" x="1325" y="172"/>
  <use href="#xx" x="1322" y="198"/>
  <use href="#pin" x="372.5" y="486"/>
  <use href="#xx" x="393" y="490.5"/>
  <use href="#pin" x="1304.5" y="486"/>
  <use href="#xx" x="1325" y="490.5"/>
  <!-- slider -->
  <path d="M1318 221 H1326 M1322 217 V225" stroke="#555" stroke-width="2"/>
  <rect x="1321" y="230" width="1" height="132" fill="#9a9a9a"/>
  <rect x="1321" y="367" width="1" height="82" fill="#4e6d9d"/>
  <rect x="1318" y="340" width="7" height="1" fill="#9a9a9a"/>
  <rect x="1315" y="362" width="13" height="5" fill="#8a8a8a"/>
  <rect x="1318" y="459" width="8" height="2" fill="#555"/>
</svg>


<!-- STATUS BAR -->
<div class="a" style="left:1px;top:890px;width:1338px;height:24px;background:#dcdcdc;border-top:1px solid #c6c6c6"></div>
<div class="a" style="left:299px;top:892px;width:50px;height:20px;background:#d3d3d3"></div>
<div class="t" style="left:5.0px;top:897px;letter-spacing:-0.102px">Calculation error: No rows found in rowset on Finance[Rules]</div>
<svg style="left:1320px;top:895px" width="18" height="18">
  <rect x="13" y="4" width="2" height="2" fill="#a0a0a0"/>
  <rect x="9" y="8" width="2" height="2" fill="#a0a0a0"/>
  <rect x="13" y="8" width="2" height="2" fill="#a0a0a0"/>
  <rect x="5" y="12" width="2" height="2" fill="#a0a0a0"/>
  <rect x="9" y="12" width="2" height="2" fill="#a0a0a0"/>
  <rect x="13" y="12" width="2" height="2" fill="#a0a0a0"/>
</svg>
</body></html>
